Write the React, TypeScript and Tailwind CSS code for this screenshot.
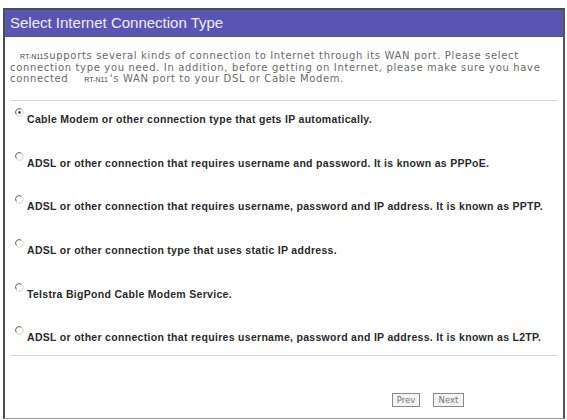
import React from "react";

function Radio({ checked }: { checked?: boolean }) {
  return (
    <svg width="9" height="9" viewBox="0 0 9 9" className="shrink-0 -mt-[5px] mr-[3px]">
      <circle cx="4.5" cy="4.5" r="3.8" fill="#fff" stroke="#c8c8c8" strokeWidth="0.8" />
      <path d="M1.2 6.2 A3.6 3.6 0 0 1 6.2 1.2" fill="none" stroke="#6a6a6a" strokeWidth="1" />
      {checked && <circle cx="4.5" cy="4.5" r="1.4" fill="#555" />}
    </svg>
  );
}

const options = [
  "Cable Modem or other connection type that gets IP automatically.",
  "ADSL or other connection that requires username and password. It is known as PPPoE.",
  "ADSL or other connection that requires username, password and IP address. It is known as PPTP.",
  "ADSL or other connection type that uses static IP address.",
  "Telstra BigPond Cable Modem Service.",
  "ADSL or other connection that requires username, password and IP address. It is known as L2TP.",
];

export default function App() {
  return (
    <div className="w-[567px] h-[420px] bg-white pt-[8px] pl-[3px]">
      <div className="w-[562px] h-[411px] border-t-2 border-l-2 border-r-2 border-b border-t-[#4c4c4c] border-l-[#4c4c4c] border-r-[#555] border-b-[#9a9a9a] flex flex-col">
        <div className="h-[27px] bg-[#5955b3] flex items-center pl-[5px]">
          <span className="text-[15px] text-[#eeedf8] [font-family:'Liberation_Sans',Arial,sans-serif]">
            Select Internet Connection Type
          </span>
        </div>
        <div className="pt-[13px] pl-[5px] text-[10px] leading-[11px] text-[#6a6a6a] [font-family:'DejaVu_Sans',Verdana,sans-serif] whitespace-nowrap tracking-[0.66px]">
          <div>
            <span className="ml-[10px] text-[7px] tracking-normal text-[#444] [font-family:'Liberation_Sans',Arial,sans-serif]">RT-N11</span>
            supports several kinds of connection to Internet through its WAN port. Please select
          </div>
          <div>connection type you need. In addition, before getting on Internet, please make sure you have</div>
          <div>
            connected
            <span className="ml-[16px] mr-[2px] text-[7px] tracking-normal text-[#444] [font-family:'Liberation_Sans',Arial,sans-serif]">RT-N11</span>
            's WAN port to your DSL or Cable Modem.
          </div>
        </div>
        <div className="mt-[15px] mx-[6px] h-px bg-[#d6d6d6]" />
        <div className="mt-[12px] pl-[10px] flex flex-col gap-[31.7px] text-[10.5px] leading-[12px] font-bold tracking-[0.3px] text-[#2a2a2a] [font-family:'Liberation_Sans',Arial,sans-serif] whitespace-nowrap">
          {options.map((o, i) => (
            <div key={i} className="flex items-start">
              <Radio checked={i === 0} />
              <span>{o}</span>
            </div>
          ))}
        </div>
        <div className="mt-[12px] mx-[6px] h-px bg-[#d6d6d6]" />
        <div className="mt-[37px] flex justify-end gap-[13px] pr-[99px]">
          <div className="w-[28px] h-[14px] border border-[#8a8a8a] bg-[#f4f4f4] flex items-center justify-center text-[8.5px] text-[#777] [font-family:'DejaVu_Sans',Verdana,sans-serif]">
            Prev
          </div>
          <div className="w-[31px] h-[14px] border border-[#8a8a8a] bg-[#f4f4f4] flex items-center justify-center text-[8.5px] text-[#777] [font-family:'DejaVu_Sans',Verdana,sans-serif]">
            Next
          </div>
        </div>
      </div>
    </div>
  );
}
